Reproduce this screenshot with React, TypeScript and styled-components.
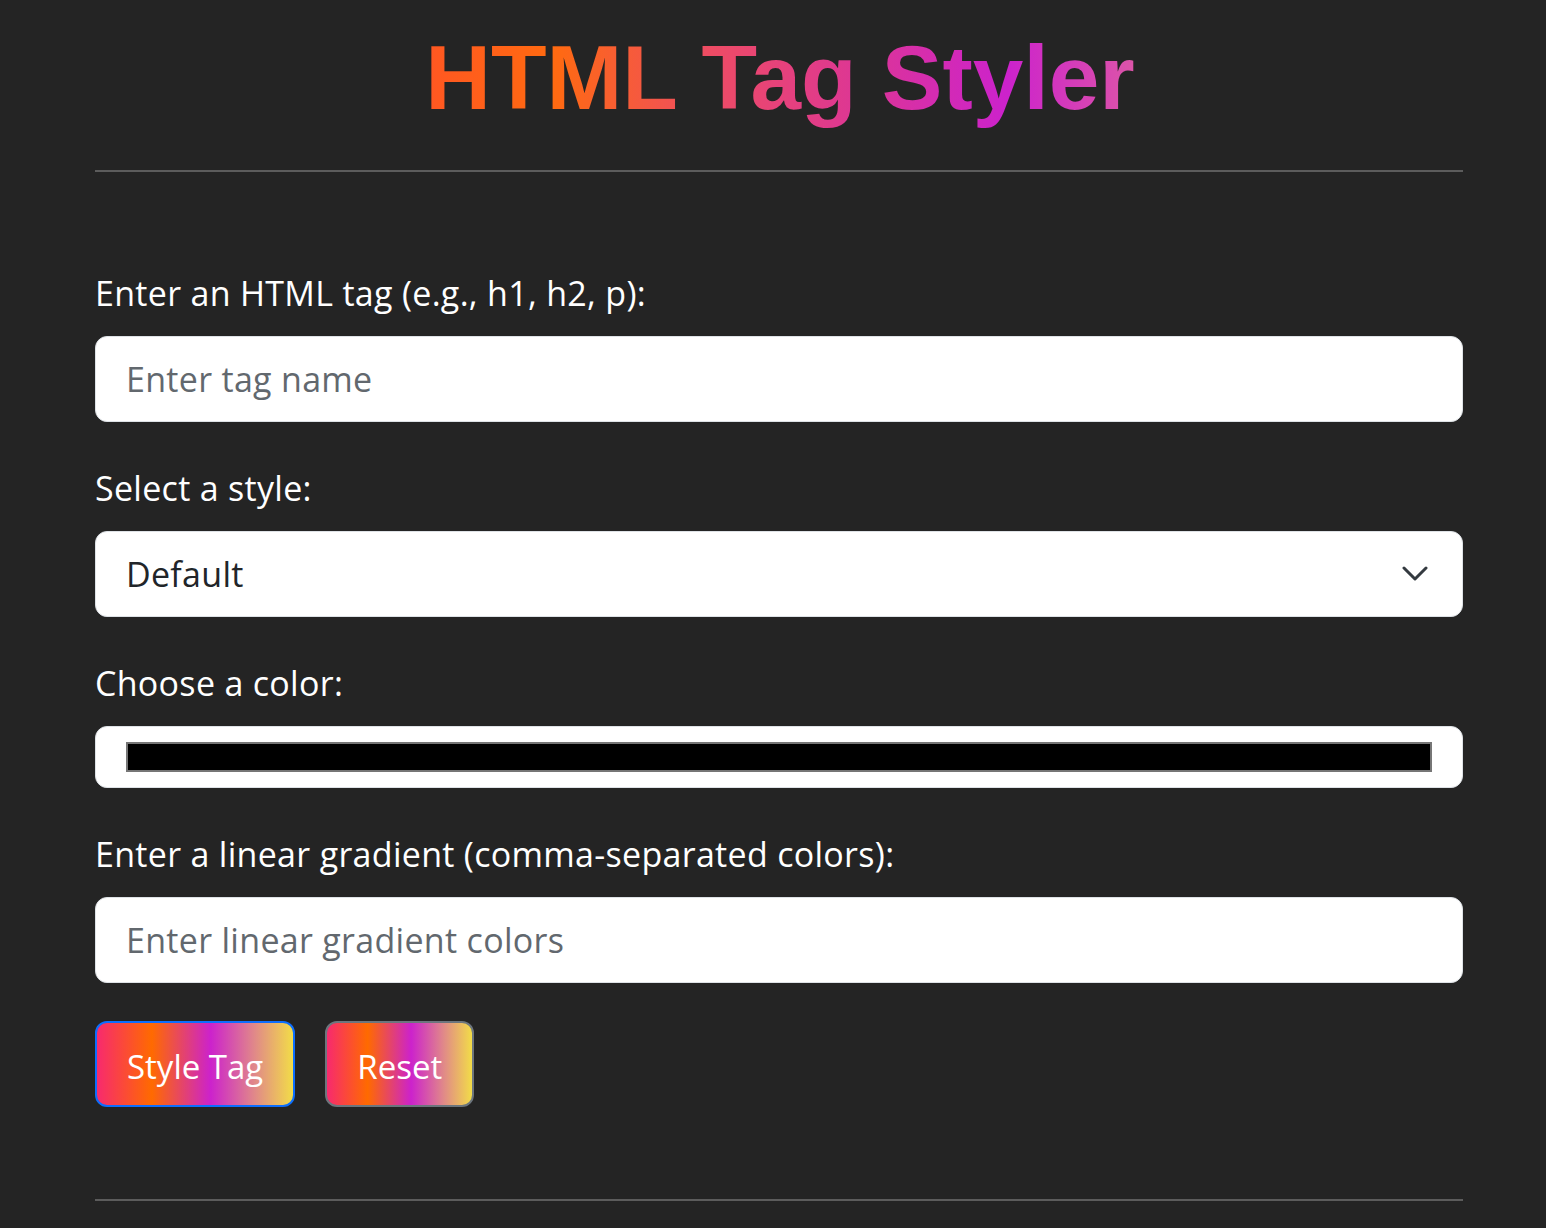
import { useState } from "react";
import styled, { createGlobalStyle } from "styled-components";

const GlobalStyle = createGlobalStyle`
  html, body {
    margin: 0;
    padding: 0;
    background-color: #242424;
  }
  body {
    font-family: "Open Sans", "Noto Sans", sans-serif;
    color: #ffffff;
  }
  * {
    box-sizing: border-box;
  }
`;

const Page = styled.div`
  min-height: 1228px;
  padding: 23px 83px 0 95px;
`;

const Title = styled.h1`
  margin: 0;
  text-align: center;
  font-family: "Liberation Sans", Arial, sans-serif;
  font-weight: 700;
  font-size: 91px;
  line-height: 110px;
  padding-left: 2px;
`;

const GradientText = styled.span`
  background: linear-gradient(
    to right,
    #ff5722 0%,
    #ff6a10 18%,
    #ee4c64 40%,
    #dc3597 62%,
    #cc22cc 82%,
    #dc55a8 100%
  );
  -webkit-background-clip: text;
  background-clip: text;
  color: transparent;
`;

const Rule = styled.hr<{ $top: number }>`
  border: none;
  border-top: 2px solid #5c5c5c;
  margin: ${(p) => p.$top}px 0 0;
`;

const Form = styled.form`
  display: flex;
  flex-direction: column;
  padding-top: 97px;
`;

const Group = styled.div`
  display: flex;
  flex-direction: column;
  margin-bottom: 42px;
`;

const Label = styled.label`
  font-size: 34px;
  letter-spacing: 0.3px;
  line-height: 48px;
  margin-bottom: 19px;
  color: #ffffff;
`;

const TextInput = styled.input`
  height: 86px;
  width: 100%;
  padding: 0 30px;
  border: 1px solid #dee2e6;
  border-radius: 12px;
  background: #ffffff;
  font-family: "Open Sans", "Noto Sans", sans-serif;
  font-size: 34px;
  letter-spacing: 0.3px;
  color: #212529;
  outline: none;

  &::placeholder {
    color: #62686e;
  }
`;

const SelectWrap = styled.div`
  position: relative;
`;

const Select = styled.select`
  appearance: none;
  height: 86px;
  width: 100%;
  padding: 0 30px;
  border: 1px solid #dee2e6;
  border-radius: 12px;
  background: #ffffff;
  font-family: "Open Sans", "Noto Sans", sans-serif;
  font-size: 34px;
  letter-spacing: 0.3px;
  color: #212529;
  outline: none;
`;

const Chevron = styled.svg`
  position: absolute;
  right: 35px;
  top: 50%;
  transform: translateY(-50%);
  pointer-events: none;
`;

const ColorBox = styled.div`
  height: 62px;
  padding: 15px 30px;
  border: 1px solid #dee2e6;
  border-radius: 12px;
  background: #ffffff;
  display: flex;
`;

const Swatch = styled.div<{ $color: string }>`
  flex: 1;
  border: 2px solid #767676;
  background: ${(p) => p.$color};
`;

const Buttons = styled.div`
  display: flex;
  gap: 30px;
  margin-top: -4px;
`;

const GradientButton = styled.button<{ $focused?: boolean }>`
  height: 86px;
  padding: 4px 30px 0;
  border-radius: 12px;
  border: 2px solid ${(p) => (p.$focused ? "#0d6efd" : "#6c757d")};
  background: linear-gradient(
    to right,
    #f72a6e 0%,
    #ff6a00 28%,
    #cc22cc 58%,
    #e0878a 80%,
    #f2dc48 100%
  );
  color: #ffffff;
  font-family: "Open Sans", "Noto Sans", sans-serif;
  font-size: 33px;
  cursor: pointer;
`;

export default function App() {
  const [tag, setTag] = useState("");
  const [style, setStyle] = useState("default");
  const [gradient, setGradient] = useState("");
  const color = "#000000";

  return (
    <>
      <GlobalStyle />
      <Page>
        <Title>
          <GradientText>HTML Tag Styler</GradientText>
        </Title>
        <Rule $top={37} />
        <Form onSubmit={(e) => e.preventDefault()}>
          <Group>
            <Label htmlFor="tag">Enter an HTML tag (e.g., h1, h2, p):</Label>
            <TextInput
              id="tag"
              placeholder="Enter tag name"
              value={tag}
              onChange={(e) => setTag(e.target.value)}
            />
          </Group>
          <Group>
            <Label htmlFor="style">Select a style:</Label>
            <SelectWrap>
              <Select
                id="style"
                value={style}
                onChange={(e) => setStyle(e.target.value)}
              >
                <option value="default">Default</option>
                <option value="bold">Bold</option>
                <option value="italic">Italic</option>
                <option value="underline">Underline</option>
              </Select>
              <Chevron width="26" height="16" viewBox="0 0 26 16">
                <path
                  d="M2 2 L13 13 L24 2"
                  fill="none"
                  stroke="#343a40"
                  strokeWidth="3"
                  strokeLinecap="round"
                  strokeLinejoin="round"
                />
              </Chevron>
            </SelectWrap>
          </Group>
          <Group>
            <Label>Choose a color:</Label>
            <ColorBox>
              <Swatch $color={color} />
            </ColorBox>
          </Group>
          <Group>
            <Label htmlFor="gradient">
              Enter a linear gradient (comma-separated colors):
            </Label>
            <TextInput
              id="gradient"
              placeholder="Enter linear gradient colors"
              value={gradient}
              onChange={(e) => setGradient(e.target.value)}
            />
          </Group>
          <Buttons>
            <GradientButton type="submit" $focused>
              Style Tag
            </GradientButton>
            <GradientButton type="button">Reset</GradientButton>
          </Buttons>
        </Form>
        <Rule $top={92} />
      </Page>
    </>
  );
}
